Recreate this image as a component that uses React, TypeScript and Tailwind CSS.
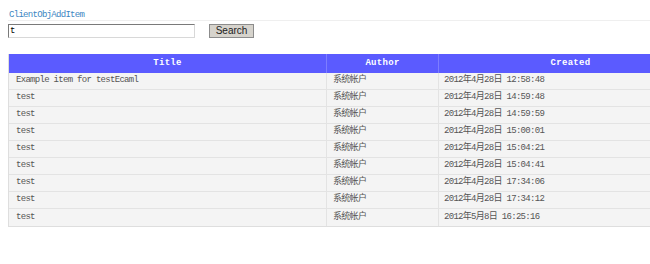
const rows = [
  ['Example item for testEcaml', '2012年4月28日 12:58:48'],
  ['test', '2012年4月28日 14:59:48'],
  ['test', '2012年4月28日 14:59:59'],
  ['test', '2012年4月28日 15:00:01'],
  ['test', '2012年4月28日 15:04:21'],
  ['test', '2012年4月28日 15:04:41'],
  ['test', '2012年4月28日 17:34:06'],
  ['test', '2012年4月28日 17:34:12'],
  ['test', '2012年5月8日 16:25:16'],
]

function App() {
  return (
    <div className="h-[264px] w-[650px] overflow-hidden bg-white font-['Liberation_Mono','Noto_Sans_CJK_SC',monospace]">
      <div className="pl-2 pt-[10px]">
        <div className="h-[11px] border-b border-[#efefef] pl-px text-[9px] leading-[10px] tracking-[-0.7px] text-[#3d86c2]">
          ClientObjAddItem
        </div>
        <div className="mt-[3px] flex items-center">
          <input
            defaultValue="t"
            className="h-[14px] w-[187px] border border-t-[#7a7a7a] border-l-[#7a7a7a] border-r-[#d8d8d8] border-b-[#d8d8d8] bg-white px-px text-[9px] leading-[12px] text-black outline-none"
          />
          <button className="ml-[14px] h-[14px] w-[45px] border border-[#8c8c8c] bg-[#d6d3cc] font-['Liberation_Sans',sans-serif] text-[10px] leading-[12px] text-[#222]">
            Search
          </button>
        </div>
      </div>
      <div className="ml-2 mt-4 w-[695px] border-x border-b border-[#dedede] text-[9px] tracking-[-0.7px] text-[#555]">
        <div className="flex h-[19px] items-center bg-[#5b5bff] font-bold tracking-[0.3px] text-white">
          <div className="w-[317px] text-center">Title</div>
          <div className="flex h-full w-[112px] items-center justify-center border-l border-[#7d7dff]">Author</div>
          <div className="flex h-full flex-1 items-center justify-center border-l border-[#7d7dff]">Created</div>
        </div>
        {rows.map(([title, created], i) => (
          <div
            key={i}
            className={`flex h-[17px] items-center bg-[#f4f4f4] ${i < rows.length - 1 ? 'border-b border-[#e3e3e3]' : ''}`}
          >
            <div className="w-[317px] pl-[7px]">{title}</div>
            <div className="flex h-full w-[112px] items-center border-l border-[#e3e3e3] pl-[6px]">系统帐户</div>
            <div className="flex h-full flex-1 items-center border-l border-[#e3e3e3] pl-[5px]">{created}</div>
          </div>
        ))}
      </div>
    </div>
  )
}

export default App
